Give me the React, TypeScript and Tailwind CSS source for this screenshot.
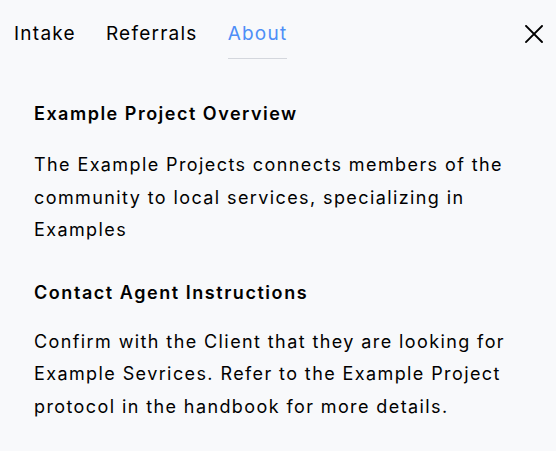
import React from 'react';

const tabs = ['Intake', 'Referrals', 'About'];

export default function App() {
    const active = 'About';
    return (
        <div className="w-[556px] h-[451px] bg-[#f8f9fb] text-black overflow-hidden" style={{ fontFamily: 'Inter, "Noto Sans", sans-serif' }}>
            <div className="flex items-start justify-between pl-[14px] pr-[12px]">
                <div className="flex gap-[30px]">
                    {tabs.map((t) => (
                        <div
                            key={t}
                            className={`pt-[21px] pb-[11px] text-[19px] leading-[26px] tracking-[1.25px] border-b ${t === active ? 'text-[#4d8ef7] border-[#d4d7dd]' : 'border-transparent'}`}
                        >
                            {t}
                        </div>
                    ))}
                </div>
                <button type="button" className="mt-[25px] mr-[1px] text-black">
                    <svg width="18" height="18" viewBox="0 0 18 18" fill="none" stroke="currentColor" strokeWidth="1.9" strokeLinecap="square">
                        <path d="M1 1 L17 17 M17 1 L1 17" />
                    </svg>
                </button>
            </div>

            <div className="px-[34px] pt-[42px] tracking-[1.4px]">
                <h2 className="text-[18px] leading-[26px] font-semibold tracking-[1.5px]">Example Project Overview</h2>
                <p className="mt-[22px] text-[18px] leading-[32.5px]">
                    The Example Projects connects members of the community to local services, specializing in Examples
                </p>
                <h2 className="mt-[33px] text-[18px] leading-[26px] font-semibold tracking-[1.55px]">Contact Agent Instructions</h2>
                <p className="mt-[20px] text-[18px] leading-[32.5px]">
                    Confirm with the Client that they are looking for Example Sevrices. Refer to the Example Project protocol in the handbook for more details.
                </p>
            </div>
        </div>
    );
}
